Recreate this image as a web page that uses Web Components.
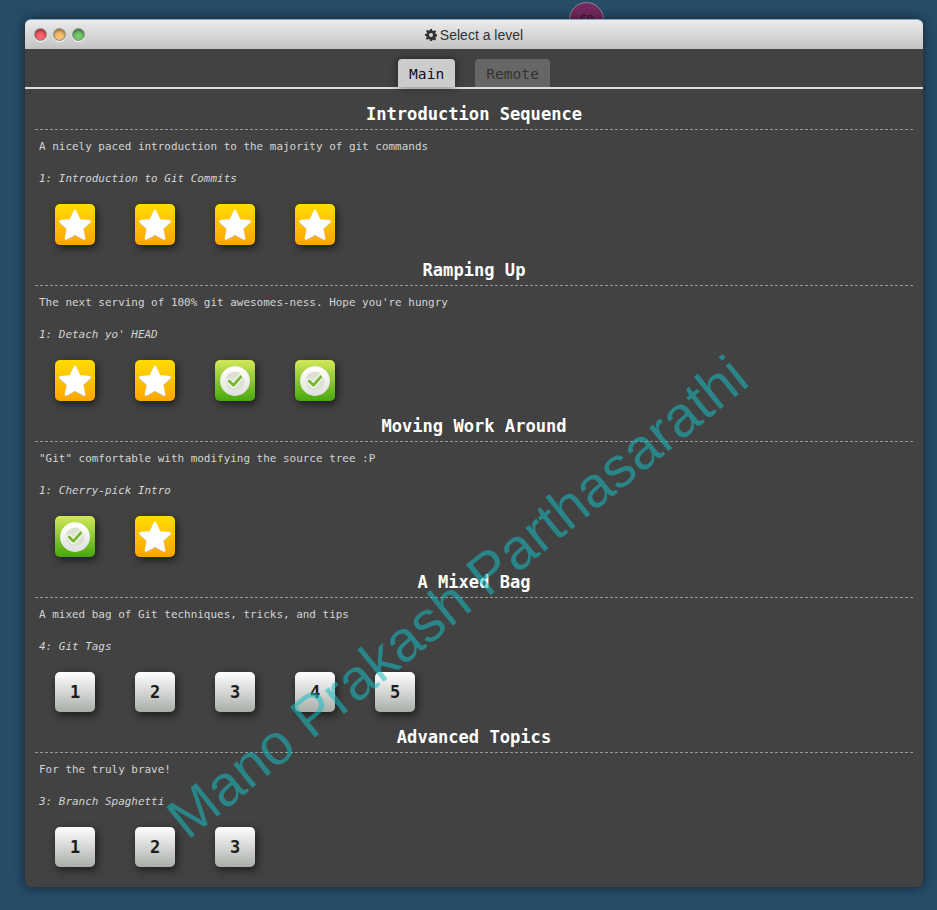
<!DOCTYPE html>
<html>
<head>
<meta charset="utf-8">
<title>Select a level</title>
<style>
    html, body { margin: 0; height: 100%; }
    body {
        background: #264c68;
        overflow: hidden;
        font-family: "DejaVu Sans Mono", monospace;
        padding: 19px 14px 0 25px;
        box-sizing: border-box;
        position: relative;
    }
</style>
</head>
<body>

<user-avatar initials="CO"></user-avatar>

<level-window>
    <span slot="title">Select a level</span>

    <tab-bar>
        <tab-button active>Main</tab-button>
        <tab-button>Remote</tab-button>
    </tab-bar>

    <level-list>
        <level-sequence heading="Introduction Sequence" about="A nicely paced introduction to the majority of git commands" current="1: Introduction to Git Commits">
            <level-icon type="star"></level-icon>
            <level-icon type="star"></level-icon>
            <level-icon type="star"></level-icon>
            <level-icon type="star"></level-icon>
        </level-sequence>

        <level-sequence heading="Ramping Up" about="The next serving of 100% git awesomes-ness. Hope you're hungry" current="1: Detach yo' HEAD">
            <level-icon type="star"></level-icon>
            <level-icon type="star"></level-icon>
            <level-icon type="check"></level-icon>
            <level-icon type="check"></level-icon>
        </level-sequence>

        <level-sequence heading="Moving Work Around" about="&quot;Git&quot; comfortable with modifying the source tree :P" current="1: Cherry-pick Intro">
            <level-icon type="check"></level-icon>
            <level-icon type="star"></level-icon>
        </level-sequence>

        <level-sequence heading="A Mixed Bag" about="A mixed bag of Git techniques, tricks, and tips" current="4: Git Tags">
            <level-icon>1</level-icon>
            <level-icon>2</level-icon>
            <level-icon>3</level-icon>
            <level-icon>4</level-icon>
            <level-icon>5</level-icon>
        </level-sequence>

        <level-sequence heading="Advanced Topics" about="For the truly brave!" current="3: Branch Spaghetti">
            <level-icon>1</level-icon>
            <level-icon>2</level-icon>
            <level-icon>3</level-icon>
        </level-sequence>
    </level-list>
</level-window>

<water-mark>Mano Prakash Parthasarathi</water-mark>

<script>
class UserAvatar extends HTMLElement {
    constructor() {
        super();
        this.attachShadow({ mode: 'open' });
        this.shadowRoot.innerHTML = `
            <style>
                :host {
                    position: absolute;
                    left: 569px;
                    top: 2px;
                    width: 33px;
                    height: 33px;
                    border: 1px solid #8a8a8a;
                    border-radius: 50%;
                    background: #74295f;
                    color: #222;
                    font: 11px/33px "DejaVu Sans Mono", monospace;
                    text-align: center;
                    z-index: 0;
                }
            </style>
            <span>${this.getAttribute('initials')}</span>
        `;
    }
}
customElements.define('user-avatar', UserAvatar);


class LevelWindow extends HTMLElement {
    constructor() {
        super();
        this.attachShadow({ mode: 'open' });
        this.shadowRoot.innerHTML = `
            <style>
                :host {
                    display: block;
                    position: relative;
                    z-index: 1;
                    width: 898px;
                    border-radius: 6px;
                    background: #424242;
                    box-shadow: 0 0 12px rgba(0, 0, 0, 0.55);
                }
                header {
                    position: relative;
                    display: flex;
                    justify-content: center;
                    align-items: center;
                    gap: 3px;
                    height: 30px;
                    box-sizing: border-box;
                    border-radius: 6px 6px 0 0;
                    border-top: 1px solid #7fa6c6;
                    background: linear-gradient(#ececec, #c3c3c3);
                    color: #333;
                    font: 14px "Liberation Sans", Arial, sans-serif;
                }
                svg { width: 12px; height: 12px; fill: #333; }
                .lights {
                    position: absolute;
                    left: 9px;
                    top: 8px;
                    display: flex;
                    gap: 6px;
                }
                .lights i {
                    box-sizing: border-box;
                    width: 13px;
                    height: 13px;
                    border-radius: 50%;
                    border: 1px solid #8c8c8c;
                    box-shadow: 0 1px 1px #fff, inset 0 2px 2px rgba(0, 0, 0, 0.3);
                }
                .red { background: radial-gradient(circle at 50% 70%, #ff6a74, #d8404c); }
                .yellow { background: radial-gradient(circle at 50% 70%, #ffc878, #d8a04c); }
                .green { background: radial-gradient(circle at 50% 70%, #7ed470, #4fa050); }
            </style>
            <header>
                <div class="lights"><i class="red"></i><i class="yellow"></i><i class="green"></i></div>
                <svg viewBox="0 0 24 24"><path fill-rule="evenodd" d="M10 0h4l.7 3.300 2 .8 2.800-1.800 2.900 2.900-1.800 2.800.8 2 3.300.7v4l-3.300.7-.8 2 1.800 2.800-2.900 2.900-2.800-1.800-2 .8L14 24h-4l-.7-3.300-2-.8-2.800 1.800-2.900-2.900 1.800-2.800-.8-2L0 14v-4l3.300-.7.8-2-1.800-2.800 2.900-2.900 2.800 1.800 2-.8zM12 8a4 4 0 1 0 0 8 4 4 0 0 0 0-8z"/></svg>
                <slot name="title"></slot>
            </header>
            <slot></slot>
        `;
    }
}
customElements.define('level-window', LevelWindow);


class TabBar extends HTMLElement {
    constructor() {
        super();
        this.attachShadow({ mode: 'open' });
        this.shadowRoot.innerHTML = `
            <style>
                :host {
                    display: flex;
                    justify-content: center;
                    gap: 20px;
                    padding-top: 10px;
                    border-bottom: 2px solid #ddd;
                }
            </style>
            <slot></slot>
        `;
    }
}
customElements.define('tab-bar', TabBar);


class TabButton extends HTMLElement {
    constructor() {
        super();
        this.attachShadow({ mode: 'open' });
        this.shadowRoot.innerHTML = `
            <style>
                :host {
                    display: block;
                    height: 28px;
                    padding: 0 11px;
                    border-radius: 4px 4px 0 0;
                    background: #666;
                    color: #333;
                    font-size: 14.6px;
                    line-height: 30px;
                }
                :host([active]) {
                    background: #ccc;
                    color: #111;
                    box-shadow: 0 0 8px rgba(0, 0, 0, 0.5);
                }
            </style>
            <slot></slot>
        `;
    }
}
customElements.define('tab-button', TabButton);


class LevelList extends HTMLElement {
    constructor() {
        super();
        this.attachShadow({ mode: 'open' });
        this.shadowRoot.innerHTML = `
            <style>
                :host {
                    display: block;
                    padding: 10px 10px 10px;
                }
            </style>
            <slot></slot>
        `;
    }
}
customElements.define('level-list', LevelList);


class LevelSequence extends HTMLElement {
    constructor() {
        super();
        this.attachShadow({ mode: 'open' });
        this.shadowRoot.innerHTML = `
            <style>
                :host { display: block; color: #d4d4d4; }
                h2 {
                    margin: 0;
                    height: 30px;
                    border-bottom: 1px dashed #999;
                    color: #fff;
                    font-size: 17.1px;
                    line-height: 30px;
                    font-weight: bold;
                    text-align: center;
                }
                p {
                    margin: 0;
                    padding-left: 4px;
                    font-size: 10.96px;
                    line-height: 14px;
                }
                .about { margin-top: 10px; }
                .current { margin-top: 18px; font-style: italic; }
                .icons {
                    display: flex;
                    gap: 40px;
                    padding: 18px 20px 10px;
                }
            </style>
            <h2>${this.getAttribute('heading')}</h2>
            <p class="about">${this.getAttribute('about')}</p>
            <p class="current">${this.getAttribute('current')}</p>
            <div class="icons"><slot></slot></div>
        `;
    }
}
customElements.define('level-sequence', LevelSequence);


class LevelIcon extends HTMLElement {
    constructor() {
        super();
        this.attachShadow({ mode: 'open' });
        this.render();
    }

    glyph() {
        if (this.getAttribute('type') === 'star') {
            return `<svg width="36" height="36" viewBox="0 0 32 32">
                <path d="M16 3.500l3.800 8.300 9 1-6.700 6.100 1.900 8.900-8-4.500-8 4.500 1.900-8.900-6.700-6.100 9-1z" fill="#b9bdd0" stroke="#b9bdd0" stroke-width="2.400" stroke-linejoin="round" transform="translate(0 .7)"/>
                <path d="M16 3.500l3.800 8.300 9 1-6.700 6.100 1.900 8.900-8-4.500-8 4.500 1.900-8.900-6.700-6.100 9-1z" fill="#fff" stroke="#fff" stroke-width="2.400" stroke-linejoin="round"/>
            </svg>`;
        }
        if (this.getAttribute('type') === 'check') {
            return `<svg width="34" height="34" viewBox="0 0 32 32">
                <defs><linearGradient id="ring" x1="0" y1="0" x2="0" y2="1"><stop offset="0" stop-color="#fff"/><stop offset="1" stop-color="#e2e2e2"/></linearGradient></defs>
                <circle cx="16" cy="16" r="11.500" fill="#dde1d2" stroke="url(#ring)" stroke-width="5"/>
                <path d="M10.500 16l4 4 7-8" fill="none" stroke="#f8f8f8" stroke-width="5" stroke-linecap="round" stroke-linejoin="round"/>
                <path d="M10.500 16l4 4 7-8" fill="none" stroke="#74b82e" stroke-width="2.600" stroke-linecap="round" stroke-linejoin="round"/>
            </svg>`;
        }
        return '<slot></slot>';
    }

    render() {
        this.shadowRoot.innerHTML = `
            <style>
                :host {
                    display: flex;
                    justify-content: center;
                    align-items: center;
                    width: 40px;
                    height: 40px;
                    border-radius: 5px;
                    background: linear-gradient(#fff, #a9aea9);
                    box-shadow: 2px 3px 9px rgba(0, 0, 0, 0.6);
                    color: #1c1c1c;
                    font-size: 17px;
                    font-weight: bold;
                }
                :host([type="star"]) {
                    height: 41px;
                    background: linear-gradient(#ffdc00, #ffa500);
                }
                :host([type="check"]) {
                    height: 41px;
                    background: linear-gradient(#d2e85a, #46a80c);
                }
                svg { display: block; flex: none; }
            </style>
            ${this.glyph()}
        `;
    }
}
customElements.define('level-icon', LevelIcon);


class WaterMark extends HTMLElement {
    constructor() {
        super();
        this.attachShadow({ mode: 'open' });
        this.shadowRoot.innerHTML = `
            <style>
                :host {
                    position: absolute;
                    left: 195px;
                    top: 786px;
                    z-index: 2;
                    transform-origin: 0 100%;
                    transform: rotate(-39deg);
                    color: rgba(22, 190, 195, 0.55);
                    font: 57.3px/64px "Liberation Sans", Arial, sans-serif;
                    white-space: nowrap;
                    pointer-events: none;
                }
            </style>
            <slot></slot>
        `;
    }
}
customElements.define('water-mark', WaterMark);
</script>
</body>
</html>
